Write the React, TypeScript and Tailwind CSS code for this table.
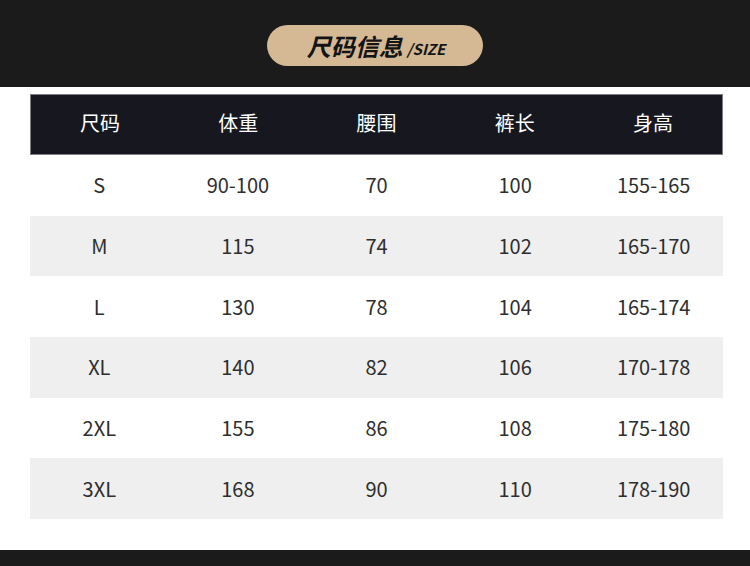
import React from "react";

const rows = [
  ["S", "90-100", "70", "100", "155-165"],
  ["M", "115", "74", "102", "165-170"],
  ["L", "130", "78", "104", "165-174"],
  ["XL", "140", "82", "106", "170-178"],
  ["2XL", "155", "86", "108", "175-180"],
  ["3XL", "168", "90", "110", "178-190"],
];
const heads = ["尺码", "体重", "腰围", "裤长", "身高"];

export default function App() {
  return (
    <div
      className="w-[750px] h-[566px] bg-white flex flex-col overflow-hidden"
      style={{ fontFamily: '"Noto Sans CJK SC", "Noto Sans", sans-serif' }}
    >
      <div className="h-[87px] bg-[#1b1b1b] flex items-start justify-center pt-[25px]">
        <div className="w-[216px] h-[41px] rounded-full bg-[#d4b994] flex items-center justify-center gap-[4px] pl-[2px]">
          <span className="text-[24px] font-bold italic text-[#141414] leading-none">尺码信息</span>
          <span className="text-[15px] font-bold italic text-[#141414] leading-none mt-[6px]">/SIZE</span>
        </div>
      </div>
      <div className="pl-[30px] pr-[27px] pt-[7px]">
        <div className="h-[61px] bg-[#17181f] border border-[#7e7e82] grid grid-cols-5 items-center pb-[3px]">
          {heads.map((h) => (
            <div key={h} className="text-center text-white text-[20px] leading-none">
              {h}
            </div>
          ))}
        </div>
        {rows.map((r, i) => (
          <div
            key={i}
            className={`h-[60.67px] grid grid-cols-5 items-center ${i % 2 === 1 ? "bg-[#efefef]" : "bg-white"}`}
          >
            {r.map((c, j) => (
              <div key={j} className="text-center text-[#2e2e2e] text-[20px] leading-none">
                {c}
              </div>
            ))}
          </div>
        ))}
      </div>
      <div className="flex-1" />
      <div className="h-[16px] bg-[#1b1b1b]" />
    </div>
  );
}
